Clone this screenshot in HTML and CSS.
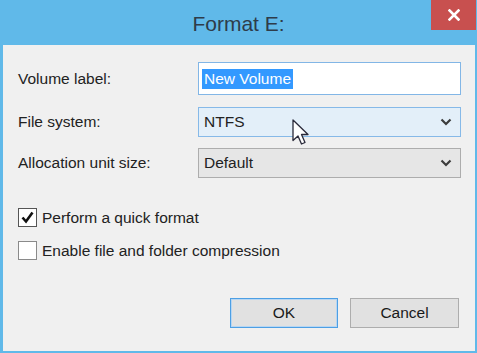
FILE: index.html
```html
<!DOCTYPE html>
<html>
<head>
<meta charset="utf-8">
<title>Format E:</title>
<link rel="stylesheet" href="styles.css">
</head>
<body>
<div class="window">
  <header class="titlebar">
    <h1 class="title">Format E:</h1>
    <div class="close" aria-label="Close">
      <svg width="12" height="12" viewBox="0 0 12 12"><path d="M1.5 1.5 L10.5 10.5 M10.5 1.5 L1.5 10.5" stroke="#fff" stroke-width="2.6" stroke-linecap="square"/></svg>
    </div>
  </header>
  <main class="content">
    <div class="row row-first">
      <span class="label">Volume label:</span>
      <div class="field field-text"><span class="selected">New Volume</span></div>
    </div>
    <div class="row">
      <span class="label">File system:</span>
      <div class="field field-select field-hover">
        <span>NTFS</span>
        <svg class="chev" width="12" height="8" viewBox="0 0 12 8"><path d="M1.5 1.5 L6 6 L10.5 1.5" fill="none" stroke="#3c3c3c" stroke-width="2.2"/></svg>
      </div>
    </div>
    <div class="row">
      <span class="label">Allocation unit size:</span>
      <div class="field field-select">
        <span>Default</span>
        <svg class="chev" width="12" height="8" viewBox="0 0 12 8"><path d="M1.5 1.5 L6 6 L10.5 1.5" fill="none" stroke="#3c3c3c" stroke-width="2.2"/></svg>
      </div>
    </div>
    <div class="checks">
      <div class="check">
        <span class="box box-checked">
          <svg width="15" height="15" viewBox="0 0 15 15"><path d="M2.5 7.5 L6 11.5 L12.5 2.5" fill="none" stroke="#111" stroke-width="2.6"/></svg>
        </span>
        <span>Perform a quick format</span>
      </div>
      <div class="check">
        <span class="box"></span>
        <span>Enable file and folder compression</span>
      </div>
    </div>
    <div class="buttons">
      <div class="btn btn-default">OK</div>
      <div class="btn">Cancel</div>
    </div>
  </main>
  <svg class="cursor" width="18" height="27" viewBox="0 0 18 27">
    <path d="M1 1 L1 21.5 L6 17 L9.5 25 L13 23.5 L9.5 15.5 L16 15.5 Z" fill="#fff" stroke="#2a2a3a" stroke-width="1.3" stroke-linejoin="round"/>
  </svg>
</div>
</body>
</html>
```

FILE: styles.css
```css
html, body {
  margin: 0;
  padding: 0;
}
body {
  font-family: "Liberation Sans", Arial, sans-serif;
  font-size: 15.5px;
  color: #222;
}
.window {
  position: relative;
  width: 477px;
  height: 353px;
  background: #60b9e9;
  display: flex;
  flex-direction: column;
  overflow: hidden;
}
.titlebar {
  position: relative;
  height: 45px;
  display: flex;
  align-items: center;
  justify-content: center;
  flex: none;
}
.title {
  margin: 0;
  padding: 3px 0 0 0;
  font-size: 21px;
  font-weight: normal;
  color: #2e3c4a;
}
.close {
  position: absolute;
  top: 0;
  right: 1px;
  width: 45px;
  height: 30px;
  background: #c8504f;
  display: flex;
  align-items: center;
  justify-content: center;
}
.content {
  flex: 1;
  margin: 0 2px 2px 3px;
  background: #f0f0f0;
  padding: 17px 14px 23px 15px;
  display: flex;
  flex-direction: column;
}
.row {
  display: flex;
  align-items: center;
  margin-top: 11px;
}
.row-first {
  margin-top: 0;
}
.label {
  width: 180px;
  flex: none;
}
.field {
  flex: 1;
  height: 30px;
  box-sizing: border-box;
  display: flex;
  align-items: center;
  padding: 0 8px 0 5px;
  border: 1px solid #adadad;
  background: #e6e6e6;
}
.field-text {
  height: 33px;
  padding-left: 3px;
  border: 1px solid #82b6e6;
  background: #fff;
  margin-bottom: 1px;
}
.selected {
  background: #3399ff;
  color: #fff;
  padding: 1px 2px;
}
.field-select {
  justify-content: space-between;
}
.field-hover {
  border-color: #86b9e8;
  background: #e3eff9;
}
.chev {
  display: block;
}
.checks {
  margin-top: 30px;
  display: flex;
  flex-direction: column;
  gap: 14px;
}
.check {
  display: flex;
  align-items: center;
  gap: 5px;
  height: 19px;
}
.box {
  width: 19px;
  height: 19px;
  box-sizing: border-box;
  border: 1px solid #8a8a8a;
  background: #fff;
  display: flex;
  align-items: center;
  justify-content: center;
}
.box-checked {
  border-color: #555;
}
.buttons {
  margin-top: auto;
  display: flex;
  justify-content: flex-end;
  gap: 12px;
  padding-right: 2px;
}
.btn {
  width: 109px;
  height: 30px;
  box-sizing: border-box;
  border: 1px solid #adadad;
  background: #e1e1e1;
  display: flex;
  align-items: center;
  justify-content: center;
  color: #1a1a1a;
}
.btn-default {
  width: 108px;
  border: 1px solid #4d9fe4;
  box-shadow: inset 0 0 0 1px #b7d6f2;
}
.cursor {
  position: absolute;
  left: 292px;
  top: 119px;
}
```
